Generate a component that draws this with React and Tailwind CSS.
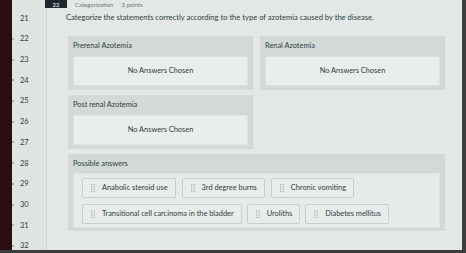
import React from 'react';

const lines = [21, 22, 23, 24, 25, 26, 27, 28, 29, 30, 31, 32];

const Grip = () => (
  <svg width="4" height="9" viewBox="0 0 4 9" className="shrink-0">
    {[0, 1, 2, 3].map((r) => (
      <g key={r} fill="#a9b2b0">
        <rect x="0" y={r * 2.3} width="1.2" height="1.2" />
        <rect x="2.6" y={r * 2.3} width="1.2" height="1.2" />
      </g>
    ))}
  </svg>
);

const Chip = ({ label }) => (
  <div className="flex items-center gap-[7px] h-[20px] pl-[8px] pr-[7px] border border-[#c8cfcd] bg-[#e8ecea] rounded-[2px]">
    <Grip />
    <span className="whitespace-nowrap">{label}</span>
  </div>
);

const Bucket = ({ title }) => (
  <div className="flex flex-col w-[185px] h-[54px] bg-[#d3d9d7] px-[5px] pb-[4px]">
    <div className="h-[20px] flex items-center">{title}</div>
    <div className="flex-1 flex items-center justify-center bg-[#e9edeb] border border-[#dde2e0]">
      No Answers Chosen
    </div>
  </div>
);

const App = () => {
  const row1 = ['Anabolic steroid use', '3rd degree burns', 'Chronic vomiting'];
  const row2 = ['Transitional cell carcinoma in the bladder', 'Uroliths', 'Diabetes mellitus'];

  return (
    <div
      className="w-[466px] h-[253px] overflow-hidden flex flex-col bg-[#3b3d3d] text-[#2f3e44]"
      style={{ fontFamily: 'Lato, "Open Sans", sans-serif' }}
    >
      <div className="flex h-[250px]">
        {/* dark frame on the left */}
        <div className="w-[12px] bg-[#2b0c13]" />

        {/* line numbers */}
        <div className="w-[35px] bg-[#dfe4e2] border-r border-[#cfd5d3] pt-[8px] flex flex-col text-[7.5px]">
          {lines.map((n, i) => (
            <div key={n} className="h-[20.7px] shrink-0 flex items-center relative">
              {i > 0 && <span className="absolute left-[0px] w-[2px] h-[2px] rounded-full bg-[#9aa3a1]" />}
              <span className="pl-[8px]">{n}</span>
            </div>
          ))}
        </div>

        {/* main */}
        <div className="flex-1 bg-[#e3e8e6] flex flex-col">
          <div className="h-[8px] flex items-center text-[6px] text-[#6e7a7d]">
            <div className="-ml-[2px] w-[22px] h-[8px] bg-[#1f2a30] text-white flex items-center justify-center text-[6px]">
              22
            </div>
            <span className="ml-[8px]">Categorization</span>
            <span className="ml-[8px]">3 points</span>
          </div>

          <div className="pl-[19px] pt-[5px] text-[7.6px] leading-[9px]">
            Categorize the statements correctly according to the type of azotemia caused by the disease.
          </div>

          <div className="pl-[21px] pt-[14px] flex flex-col gap-[5px] text-[7.4px]">
            <div className="flex gap-[7px]">
              <Bucket title="Prerenal Azotemia" />
              <Bucket title="Renal Azotemia" />
            </div>
            <div className="flex">
              <Bucket title="Post renal Azotemia" />
            </div>

            <div className="w-[377px] h-[77px] bg-[#d3d9d7] px-[5px] pb-[3px] flex flex-col">
              <div className="h-[19px] flex items-center">Possible answers</div>
              <div className="flex-1 bg-[#e6eae8] border border-[#dde2e0] pl-[8px] pt-[4px] flex flex-col gap-[6px]">
                <div className="flex gap-[6px]">
                  {row1.map((c) => <Chip key={c} label={c} />)}
                </div>
                <div className="flex gap-[5px]">
                  {row2.map((c) => <Chip key={c} label={c} />)}
                </div>
              </div>
            </div>
          </div>
        </div>

        {/* dark frame on the right */}
        <div className="w-[4px] bg-[#3b3d3d]" />
      </div>
    </div>
  );
};

export default App;
